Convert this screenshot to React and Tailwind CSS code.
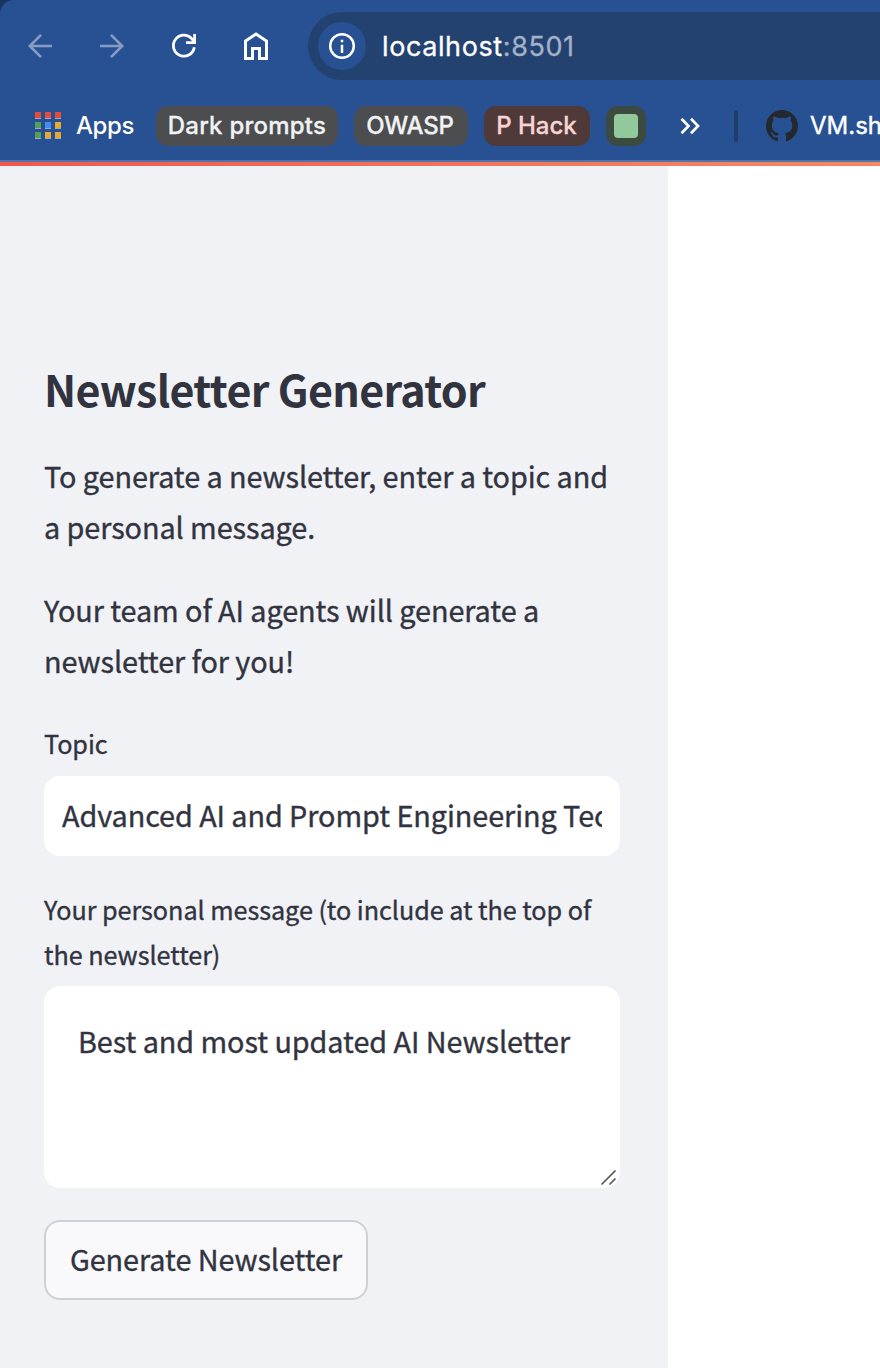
import React from "react";

const SANS = "font-['Noto_Sans_CJK_SC','Noto_Sans',sans-serif]";

function Toolbar() {
  return (
    <div className="flex h-[92px] items-center">
      <svg className="ml-6 shrink-0" width="32" height="32" viewBox="0 0 32 32" fill="none" stroke="#869cc5" strokeWidth="2.6">
        <path d="M28 16H6M17 4.800 5.800 16 17 27.200" />
      </svg>
      <svg className="ml-10 shrink-0" width="32" height="32" viewBox="0 0 32 32" fill="none" stroke="#869cc5" strokeWidth="2.6">
        <path d="M4 16h22M15 4.800 26.200 16 15 27.200" />
      </svg>
      <svg className="ml-10 shrink-0" width="32" height="32" viewBox="0 0 32 32" fill="none" stroke="#fff" strokeWidth="2.8">
        <path d="M26.300 17.200A10.500 10.500 0 1 1 23.500 8.400L26.500 12M26.600 4v8.600H18" />
      </svg>
      <svg className="ml-10 shrink-0" width="32" height="32" viewBox="0 0 32 32" fill="none" stroke="#fff" strokeWidth="3">
        <path d="M5.500 11 16 4l10.500 7v17.500h-7V18.500h-7v10h-7Z" />
      </svg>
      <div className="ml-9 flex h-[68px] flex-1 items-center rounded-l-full bg-[#24426f] pl-[10px]">
        <div className="flex h-12 w-12 items-center justify-center rounded-full bg-[#285194]">
          <svg width="28" height="28" viewBox="0 0 28 28" fill="none">
            <circle cx="14" cy="14" r="11.800" stroke="#fff" strokeWidth="2.500" />
            <path d="M14 12.700v8.300M14 7.800v2.500" stroke="#fff" strokeWidth="2.500" />
          </svg>
        </div>
        <div className="ml-4 whitespace-nowrap font-['Inter',sans-serif] text-[27px] leading-none tracking-[0.6px] text-white [-webkit-text-stroke:0.3px]">
          localhost<span className="text-[#a3b1ca]">:8501</span>
        </div>
      </div>
    </div>
  );
}

const DOTS = ["#e34d3d", "#e34d3d", "#e34d3d", "#559e5b", "#4689f0", "#e8a832", "#559e5b", "#e8a832", "#e8a832"];

function Bookmarks() {
  return (
    <div className="flex h-[68px] items-center whitespace-nowrap font-['Inter',sans-serif] text-[24px] leading-none font-medium text-white">
      <svg className="ml-[35px] -mt-px shrink-0" width="26" height="27" viewBox="0 0 26 27">
        {DOTS.map((c, i) => (
          <g key={i}>
            <rect x={(i % 3) * 10} y={Math.floor(i / 3) * 10} width="6" height="7" fill="#9aabc8" />
            <rect x={(i % 3) * 10} y={Math.floor(i / 3) * 10} width="6" height="6" fill={c} />
          </g>
        ))}
      </svg>
      <span className="ml-[15px] w-[80px] shrink-0 tracking-[-0.4px]">Apps</span>
      <div className="flex h-10 w-[182px] shrink-0 items-center justify-center rounded-xl bg-[#4b4d4f] tracking-[0.23px] text-[#f1f2f4] [-webkit-text-stroke:0.3px]">Dark prompts</div>
      <div className="ml-4 flex h-10 w-[114px] shrink-0 items-center justify-center rounded-xl bg-[#4b4d4f] pr-[2px] tracking-[-0.2px] text-[#f1f2f4] [-webkit-text-stroke:0.3px]">OWASP</div>
      <div className="ml-4 flex h-10 w-[106px] shrink-0 items-center justify-center rounded-xl bg-[#4f3a39] pr-[1px] text-[#f8d5d2] [-webkit-text-stroke:0.3px]">P Hack</div>
      <div className="ml-4 flex h-10 w-10 shrink-0 items-center justify-center rounded-xl bg-[#3c4a40]">
        <div className="h-6 w-6 rounded bg-[#92c99b]" />
      </div>
      <svg className="ml-[33px] shrink-0" width="22" height="18" viewBox="0 0 22 18" fill="none" stroke="#fff" strokeWidth="2.700">
        <path d="m2.500 1.800 7 7.200-7 7.200M12 1.800 19 9l-7 7.200" />
      </svg>
      <div className="ml-[33px] h-8 w-1 shrink-0 rounded-full bg-[#1f3d6b]" />
      <svg className="ml-7 shrink-0" width="32" height="32" viewBox="0 0 16 16" fill="#24292f">
        <path d="M8 0C3.580 0 0 3.580 0 8c0 3.540 2.290 6.530 5.470 7.590.4.070.55-.17.55-.38 0-.19-.01-.82-.01-1.490-2.010.37-2.530-.49-2.690-.94-.09-.23-.48-.94-.82-1.130-.28-.15-.68-.52-.01-.53.63-.01 1.080.58 1.230.82.72 1.210 1.870.87 2.330.66.07-.52.28-.87.51-1.070-1.780-.2-3.640-.89-3.640-3.950 0-.87.31-1.590.82-2.150-.08-.2-.36-1.020.08-2.120 0 0 .67-.21 2.200.82.64-.18 1.320-.27 2-.27s1.360.09 2 .27c1.530-1.040 2.200-.82 2.200-.82.44 1.100.16 1.920.08 2.120.51.56.82 1.270.82 2.150 0 3.070-1.870 3.750-3.650 3.950.29.25.54.73.54 1.480 0 1.070-.01 1.930-.01 2.200 0 .21.15.46.55.38A8.010 8.010 0 0 0 16 8c0-4.420-3.580-8-8-8Z" />
      </svg>
      <span className="ml-3 font-normal [-webkit-text-stroke:0.4px]">VM.sh</span>
    </div>
  );
}

export default function App() {
  return (
    <div className="flex h-[1368px] w-[880px] flex-col overflow-hidden bg-white">
      <header className="shrink-0 bg-[#1b355f]">
        <div className="h-[160px] rounded-tl-[14px] bg-[#285194]">
          <Toolbar />
          <Bookmarks />
        </div>
        <div className="h-[2px] bg-[#5073ab]" />
        <div className="h-1 bg-linear-to-r from-[#f05850] to-[#f48862]" />
      </header>
      <aside className={`flex w-[668px] flex-1 flex-col bg-[#f0f2f6] pt-[193px] pr-12 pl-11 tracking-[-0.07px] text-[#31333f] [-webkit-text-stroke:0.35px] ${SANS}`}>
        <h1 className="h-[58px] whitespace-nowrap text-[43px] leading-[58px] font-bold tracking-[-0.68px] [-webkit-text-stroke:0]">Newsletter Generator</h1>
        <p className="mt-[33px] h-[102px] whitespace-nowrap text-[28.8px] leading-[51px]">
          To generate a newsletter, enter a topic and<br />a personal message.
        </p>
        <p className="mt-8 h-[102px] whitespace-nowrap text-[28.8px] leading-[51px]">
          Your team of AI agents will generate a<br />newsletter for you!
        </p>
        <label className="mt-[35px] h-[55px] text-[25.2px] leading-[45px]">Topic</label>
        <div className="flex h-20 shrink-0 items-center rounded-2xl bg-white px-[18px]">
          <input
            type="text"
            defaultValue="Advanced AI and Prompt Engineering Techniques"
            className="mb-[2px] h-[52px] w-full min-w-0 bg-transparent p-0 text-[28.8px] leading-[52px] outline-none"
          />
        </div>
        <label className="mt-[31px] h-[99px] whitespace-nowrap text-[25.2px] leading-[45px] tracking-[-0.04px]">
          Your personal message (to include at the top of<br />the newsletter)
        </label>
        <div className="flex h-[202px] shrink-0 items-end justify-between rounded-2xl bg-white pr-[3px] pl-[34px]">
          <div className="h-[173px] whitespace-nowrap text-[28.8px] leading-[52px]">Best and most updated AI Newsletter</div>
          <svg className="mb-[2px] shrink-0" width="17" height="17" viewBox="0 0 17 17" stroke="#555" strokeWidth="1.600">
            <path d="M1.500 15.500 15.500 1.500M9.500 15.500l6-6" />
          </svg>
        </div>
        <button className="mt-8 h-20 w-[324px] shrink-0 rounded-2xl border-2 border-[#cfd0d4] bg-[#f9f9fb] pb-[2px] text-[28.8px] leading-none whitespace-nowrap">
          Generate Newsletter
        </button>
      </aside>
    </div>
  );
}
